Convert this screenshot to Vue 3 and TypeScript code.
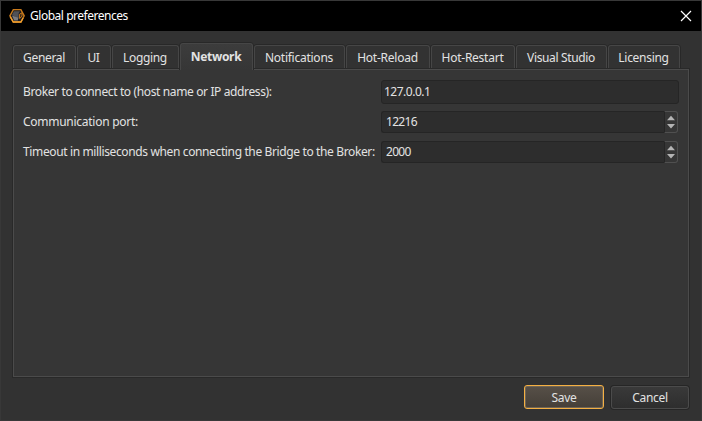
<script setup lang="ts">
import { ref } from 'vue'

interface Tab {
  label: string
  width: number
  spacing: number
}

const tabs: Tab[] = [
  { label: 'General', width: 63, spacing: -0.35 },
  { label: 'UI', width: 34, spacing: -0.3 },
  { label: 'Logging', width: 67, spacing: -0.35 },
  { label: 'Network', width: 73, spacing: -0.3 },
  { label: 'Notifications', width: 91, spacing: -0.25 },
  { label: 'Hot-Reload', width: 84, spacing: -0.25 },
  { label: 'Hot-Restart', width: 84, spacing: -0.25 },
  { label: 'Visual Studio', width: 91, spacing: -0.35 },
  { label: 'Licensing', width: 72, spacing: -0.3 },
]
const active = ref('Network')
const host = ref('127.0.0.1')
const port = ref('12216')
const timeout = ref('2000')
</script>

<template>
  <div class="window">
    <header class="titlebar">
      <svg class="logo" width="16" height="16" viewBox="0 0 16 16">
        <path d="M4.3 1.6h7.6l3.3 6.2-3.3 6.2H4.3L.9 7.8z" fill="#1c1c1e" stroke="#c97a1b" stroke-width="1.4" />
        <path d="M3 7 5 3.2h6L9.6 5.5v5z" fill="#505156" />
        <path d="M3 7.4 9.4 9.8l-.6 2.6H5.2z" fill="#7a7b80" />
        <path d="M10.6 10.5V6.2L13 4.8v3.4z" fill="#2b2118" stroke="#c97a1b" stroke-width="1" />
        <path d="M1.2 8.6 4.3 14h7.6l2.2-4" fill="none" stroke="#f0a030" stroke-width="1.4" />
      </svg>
      <span class="title">Global preferences</span>
      <svg class="close" width="12" height="12" viewBox="0 0 12 12">
        <path d="M1 1 11 11M11 1 1 11" stroke="#fff" stroke-width="1.2" />
      </svg>
    </header>
    <nav class="tabs">
      <button
        v-for="tab in tabs"
        :key="tab.label"
        class="tab"
        :class="{ active: tab.label === active }"
        :style="{ width: tab.width + 'px', letterSpacing: tab.spacing + 'px' }"
        @click="active = tab.label"
      >{{ tab.label }}</button>
    </nav>
    <main class="panel">
      <label class="row">
        <span class="label">Broker to connect to (host name or IP address):</span>
        <input v-model="host" class="field host" />
      </label>
      <label class="row">
        <span class="label port">Communication port:</span>
        <span class="spin">
          <input v-model="port" class="field" />
          <span class="steps">
            <svg width="12" height="20" viewBox="0 0 12 20"><path d="M2 8.2 6 3.8 10 8.2zM2 12 6 16.4 10 12z" fill="#b4b4b4" /></svg>
          </span>
        </span>
      </label>
      <label class="row">
        <span class="label">Timeout in milliseconds when connecting the Bridge to the Broker:</span>
        <span class="spin">
          <input v-model="timeout" class="field" />
          <span class="steps">
            <svg width="12" height="20" viewBox="0 0 12 20"><path d="M2 8.2 6 3.8 10 8.2zM2 12 6 16.4 10 12z" fill="#b4b4b4" /></svg>
          </span>
        </span>
      </label>
    </main>
    <footer class="actions">
      <button class="btn primary">Save</button>
      <button class="btn">Cancel</button>
    </footer>
  </div>
</template>

<style>
body { margin: 0; background: #323232; }
</style>

<style scoped>
* { box-sizing: border-box; }
.window {
  width: 702px;
  height: 421px;
  display: flex;
  flex-direction: column;
  background: #323232;
  border: 1px solid #383838;
  font: 12px/16px "Noto Sans", "Open Sans", sans-serif;
  color: #e2e2e2;
}
button, input { font: inherit; color: inherit; margin: 0; outline: none; }
.titlebar {
  flex: none;
  height: 30px;
  background: #000;
  display: flex;
  align-items: center;
  padding: 0 9px 0 8px;
}
.logo { margin-right: 5px; }
.title { color: #fff; letter-spacing: -0.47px; white-space: nowrap; }
.close { margin-left: auto; }
.tabs {
  flex: none;
  height: 38px;
  display: flex;
  align-items: flex-end;
  gap: 1px;
  padding-left: 12px;
}
.tab {
  flex: none;
  height: 24px;
  padding: 1px 1px 0 0;
  text-align: center;
  white-space: nowrap;
  background: #323232;
  border: 1px solid #464646;
  border-bottom: 0;
  border-radius: 3px 3px 0 0;
  box-shadow: 0 -1px 0 #282828, 1px 0 0 #282828, -1px 0 0 #282828;
}
.tab.active {
  position: relative;
  height: 27px;
  padding: 0 1px 0 0;
  margin-bottom: -1px;
  font-weight: 700;
  background: linear-gradient(#3c3c3c, #363636);
  z-index: 1;
}
.panel {
  flex: none;
  margin: 0 12px;
  height: 308px;
  border: 1px solid #4b4b4b;
  background: #363636;
  box-shadow: 0 0 0 1px #292929;
  padding: 10px 9px 0;
}
.row { display: flex; align-items: center; height: 24px; margin-bottom: 6px; }
.label { flex: 0 0 358px; white-space: nowrap; letter-spacing: -0.37px; }
.label.port { letter-spacing: -0.27px; }
.field {
  flex: 1;
  min-width: 0;
  height: 22px;
  background: #2d2d2d;
  border: 1px solid #252525;
  border-radius: 3px;
  padding: 0 4px 2px;
  letter-spacing: -0.7px;
}
.host { height: 24px; padding: 0 2px 2px; letter-spacing: -0.5px; }
.spin { flex: 1; display: flex; height: 22px; min-width: 0; padding-right: 1px; }
.spin .field { border-radius: 3px 0 0 3px; border-right: 0; }
.steps {
  width: 14px;
  height: 22px;
  border: 1px solid #505050;
  border-left-color: #252525;
  border-radius: 0 3px 3px 0;
  background: #363636;
}
.steps svg { display: block; }
.actions {
  display: flex;
  justify-content: flex-end;
  gap: 7px;
  padding: 8px 12px 0 0;
}
.btn {
  width: 78px;
  height: 23px;
  margin-top: 1px;
  padding: 0;
  border: 1px solid #4b4b4b;
  border-radius: 3px;
  background: linear-gradient(#393939, #2e2e2e);
  box-shadow: 0 0 0 1px #262626;
  letter-spacing: -0.3px;
}
.btn.primary {
  width: 80px;
  height: 24px;
  margin-top: 0;
  padding-top: 2px;
  border-color: #f5b043;
  background: linear-gradient(#575048, #453f38);
  box-shadow: inset 0 0 0 1px #706555;
}
</style>
